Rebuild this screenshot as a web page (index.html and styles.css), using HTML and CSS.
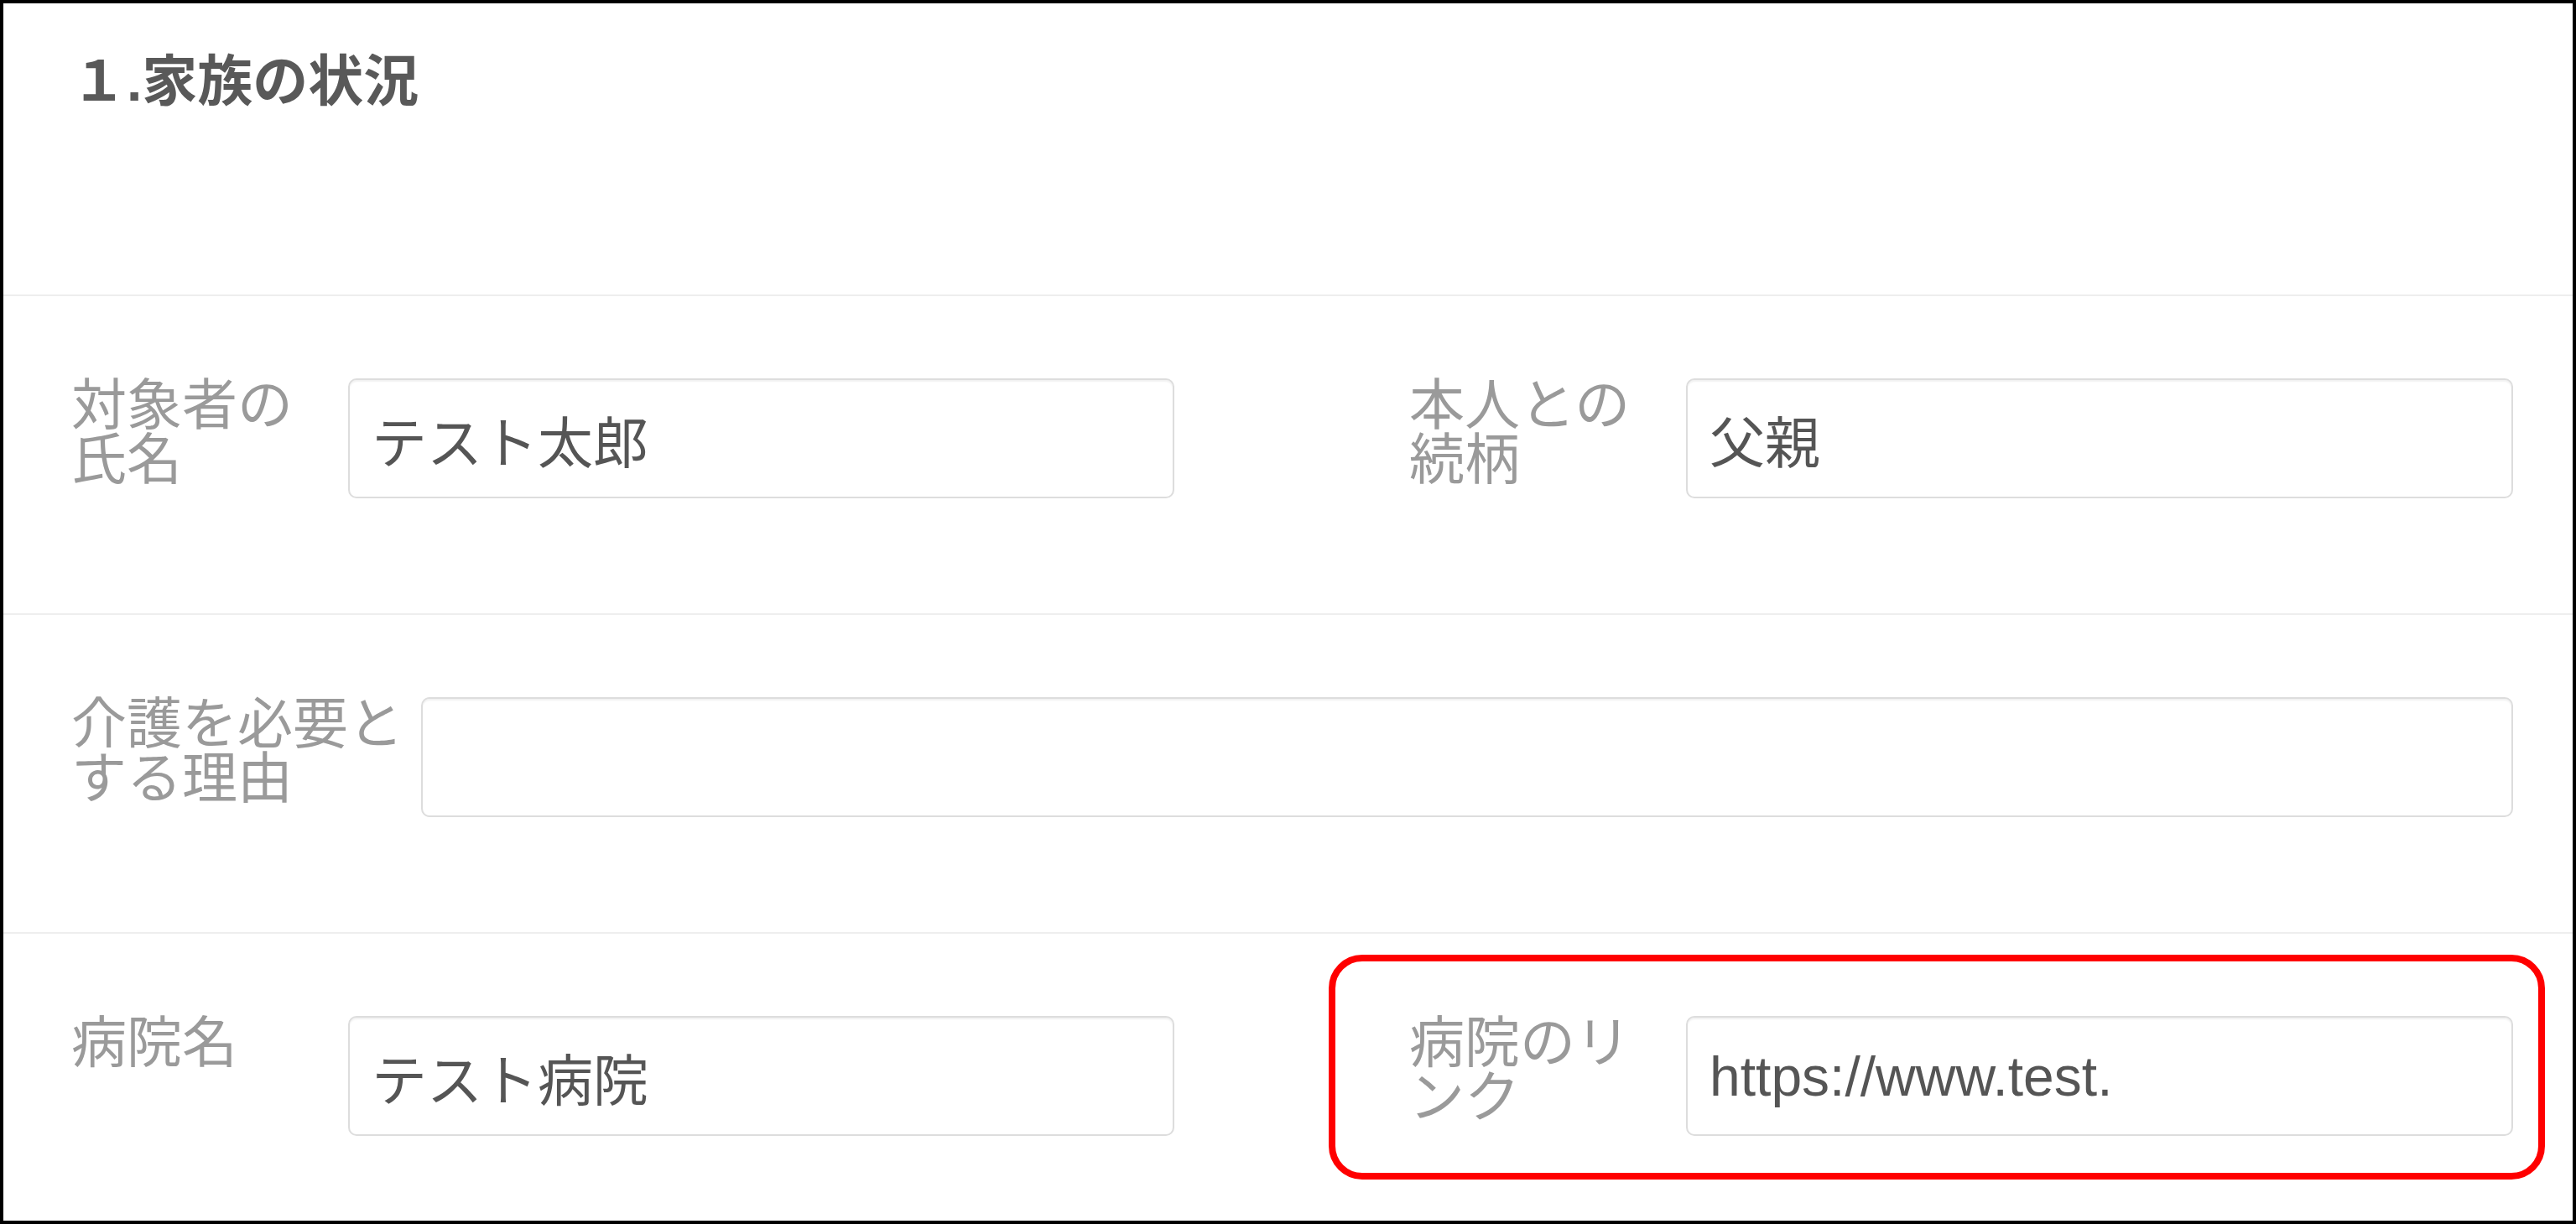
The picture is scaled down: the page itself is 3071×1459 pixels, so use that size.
FILE: index.html
```html
<!DOCTYPE html>
<html lang="ja">
<head>
  <meta charset="UTF-8" />
  <title>家族の状況</title>
  <link rel="stylesheet" href="styles.css">
</head>
<body>
  <div class="frame">
    <div class="section-title">
      <h2>１.家族の状況</h2>
    </div>

    <div class="row">
      <div class="field">
        <label for="name">対象者の氏名</label>
        <input id="name" type="text" value="テスト太郎">
      </div>
      <div class="field">
        <label for="relation">本人との続柄</label>
        <input id="relation" type="text" value="父親">
      </div>
    </div>

    <div class="row">
      <div class="field wide">
        <label for="reason">介護を必要とする理由</label>
        <input id="reason" type="text" value="">
      </div>
    </div>

    <div class="row last">
      <div class="field">
        <label for="hospital">病院名</label>
        <input id="hospital" type="text" value="テスト病院">
      </div>
      <div class="field marked">
        <label for="hospital-link">病院のリンク</label>
        <input id="hospital-link" type="text" value="https://www.test.">
      </div>
    </div>
  </div>
</body>
</html>
```

FILE: styles.css
```css
:root {
  --line: #eeeeee;
  --input-border: #dddddd;
  --label: #9a9a9a;
  --text: #555555;
  --mark: #ff0000;
}
* { box-sizing: border-box; }
html, body { margin: 0; padding: 0; background: #fff; }
body {
  font-family: "Liberation Sans", "Noto Sans CJK JP", sans-serif;
  color: var(--text);
}
.frame {
  height: 1459px;
  border: 4px solid #000;
  overflow: hidden;
}

.section-title {
  height: 349px;
  padding: 60px 0 0 81px;
  border-bottom: 2px solid var(--line);
}
.section-title h2 {
  margin: 0;
  font-size: 66px;
  line-height: 66px;
  font-weight: 700;
  color: #595959;
}

.row {
  display: grid;
  grid-template-columns: 1315px 1316px;
  column-gap: 280px;
  padding: 98px 0 137px 81px;
  border-bottom: 2px solid var(--line);
}
.row.last { border-bottom: 0; }

.field {
  position: relative;
  display: grid;
  grid-template-columns: 330px 1fr;
  align-items: start;
}
.field.wide {
  grid-column: 1 / -1;
  grid-template-columns: 417px 1fr;
}

.field label {
  padding-right: 15px;
  font-size: 66px;
  line-height: 65px;
  color: var(--label);
  word-break: break-all;
}

.field input {
  width: 100%;
  height: 143px;
  margin: 0;
  padding: 0 26px;
  font: inherit;
  font-size: 66px;
  color: var(--text);
  background: #fff;
  border: 2px solid var(--input-border);
  border-radius: 10px;
  box-shadow: inset 0 2px 2px rgba(0,0,0,0.06);
  outline: none;
}

/* annotation around the link field */
.field.marked::before {
  content: "";
  position: absolute;
  left: -96px;
  right: -38px;
  top: -73px;
  bottom: -52px;
  border: 8px solid var(--mark);
  border-radius: 40px;
  pointer-events: none;
}
```
